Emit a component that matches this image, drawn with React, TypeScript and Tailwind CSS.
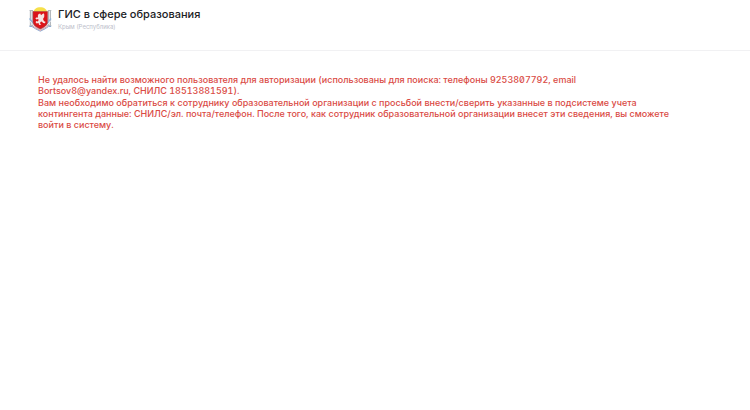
import React from "react";

function Emblem() {
  return (
    <svg viewBox="0 0 24 26" className="h-[26px] w-6 shrink-0" role="img" aria-label="Герб">
      {/* rising sun */}
      <path d="M5.200 7C5.500 3 8.500 1.200 12.300 1.200S19 3 19.400 7z" fill="#f6e04a" />
      {/* columns */}
      <path d="M1.500 4.500h3.500M2.400 5v14M4.200 5v14M1.500 19.700h4" stroke="#b3b8bd" strokeWidth="1.200" fill="none" />
      <path d="M19.800 4.500h3.500M20.600 5v14M22.400 5v14M19 19.700h4.300" stroke="#b3b8bd" strokeWidth="1.200" fill="none" />
      {/* ribbon */}
      <path d="M1.500 12.500l5.300 6.500 5.500 4 5.500-4 5.300-6.500" stroke="#8eb2dc" strokeWidth="1.200" fill="none" />
      <path d="M1.500 14.500l5.300 6.200 5.500 3.200 5.500-3.200 5.300-6.200" stroke="#e9edf2" strokeWidth="1" fill="none" />
      <path d="M1.500 20.500h2.500l3.500 2.300 4.800 2.400 4.800-2.400 3.500-2.300h2.500" stroke="#8aaad2" strokeWidth="1" fill="none" />
      <path d="M4.500 19.800l3.500 2.300 4.300 2.200 4.300-2.200 3.500-2.300" stroke="#dc8a90" strokeWidth="0.800" fill="none" />
      {/* shield */}
      <path d="M5 5.500h14.600v10c0 3.600-3 5.800-7.300 7.500C8 21.300 5 19.100 5 15.500z" fill="#db141a" stroke="#a8484a" strokeWidth="0.600" />
      {/* griffin */}
      <path
        d="M12.300 7.500l.7 1.800 2.400-2 .9 1.200-.1 2.500-1.200 2 1 2.200 1.500.6-.5 1.500-1.900-.3-1.300-1.500-1.400.4-.3 1.700 1.100 1.200-2.100.1-.6-1.900-1.900.4-1-1.200.5-1.300 1.500.6.900-1.100-.2-1.500-2 .6-.9-1.200.8-.7 1.800-.2-.2-1.600.8-1.700z"
        fill="#f6e3e1"
      />
    </svg>
  );
}

function Header() {
  return (
    <header className="flex h-[51px] items-start border-b border-[#f1f1f3] px-7 pt-1.5">
      <Emblem />
      <div className="ml-1.5">
        <h1 className="text-[11px] leading-4 font-medium text-[#202124]">ГИС в сфере образования</h1>
        <p className="text-[6px] leading-2.5 text-[#bcc0ca]">Крым (Республика)</p>
      </div>
    </header>
  );
}

function App() {
  return (
    <div className="min-h-screen bg-white font-['Inter',sans-serif]">
      <Header />
      <main className="px-[38px] pt-[23px]">
        <div
          role="alert"
          className="flex max-w-[648px] flex-col gap-px text-[9px] leading-[11px] font-medium text-[#da4b45] tabular-nums slashed-zero"
        >
          <p>
            Не удалось найти возможного пользователя для авторизации (использованы для поиска: телефоны 9253807792, email
            <br />
            Bortsov8@yandex.ru, СНИЛС 18513881591).
          </p>
          <p>
            Вам необходимо обратиться к сотруднику образовательной организации с просьбой внести/сверить указанные в
            подсистеме учета
            <br />
            контингента данные: СНИЛС/эл. почта/телефон. После того, как сотрудник образовательной организации внесет эти
            сведения, вы сможете войти в систему.
          </p>
        </div>
      </main>
    </div>
  );
}

export default App;
